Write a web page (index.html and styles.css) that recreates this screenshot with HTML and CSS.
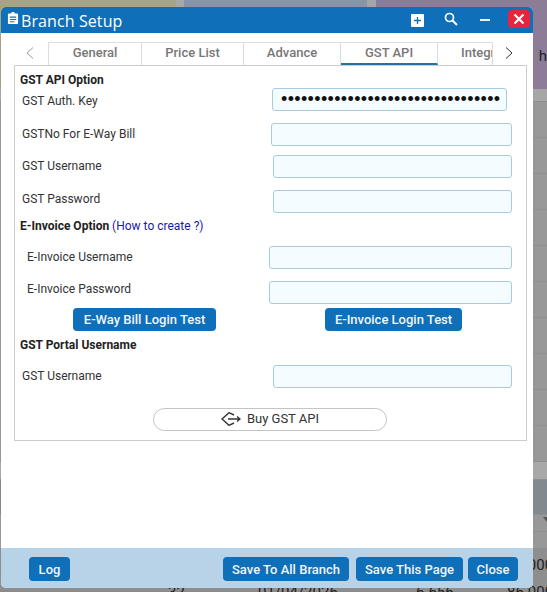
FILE: index.html
```html
<!DOCTYPE html>
<html lang="en">
<head>
  <meta charset="utf-8">
  <title>Branch Setup</title>
  <meta name="viewport" content="width=device-width, initial-scale=1.0">
  <link rel="stylesheet" href="styles.css">
</head>
<body>
  <!-- Page behind the dialog -->
  <div class="backdrop">
    <div class="backdrop-top">
      <div class="seg-tan"></div>
      <div class="seg-blue"></div>
      <div class="seg-purple"><span class="stray-h">h</span></div>
    </div>
    <div class="backdrop-rows">
      <div class="grey-row light"></div>
      <div class="grey-row"></div>
      <div class="grey-row"></div>
      <div class="grey-row"></div>
      <div class="grey-row"></div>
      <div class="grey-row"></div>
      <div class="grey-row"></div>
      <div class="grey-row"></div>
      <div class="grey-row"></div>
      <div class="grey-row"></div>
      <div class="grey-row"></div>
      <div class="grey-row band"></div>
      <div class="grey-row head"></div>
      <div class="grey-row short"><span class="sort-mark"></span></div>
      <div class="grey-row short"></div>
      <div class="grey-row cut">86.000</div>
      <div class="back-cells">
        <span class="cell-a">32</span>
        <span class="cell-b">01/04/2026</span>
        <span class="cell-c">6.656</span>
        <span class="cell-d">86.000</span>
      </div>
    </div>
  </div>

  <div class="dialog">
    <div class="dialog-head">
      <svg class="title-icon" viewBox="0 0 12 13" width="12" height="12">
        <path fill="#fff" d="M4 1.500a2 1.500 0 0 1 4 0h2.500a1 1 0 0 1 1 1V12a1 1 0 0 1-1 1h-9a1 1 0 0 1-1-1V2.500a1 1 0 0 1 1-1z"/>
        <path fill="#0f6fb8" d="M2.500 5h7v1.200h-7zM2.500 7.500h7v1.200h-7zM2.500 10h5v1h-5z"/>
      </svg>
      <span class="dialog-title">Branch Setup</span>
      <div class="head-tools">
        <svg class="tool-add" viewBox="0 0 13 13" width="13" height="13">
          <rect width="13" height="13" rx="1" fill="#fff"/>
          <path d="M6.500 3v7M3 6.500h7" stroke="#0f6fb8" stroke-width="1.300"/>
        </svg>
        <svg class="tool-search" viewBox="0 0 14 14" width="14" height="14">
          <circle cx="5.500" cy="5.500" r="4" fill="none" stroke="#fff" stroke-width="1.700"/>
          <path d="M8.500 8.500l4.500 4.500" stroke="#fff" stroke-width="2"/>
        </svg>
        <span class="tool-min"></span>
        <span class="tool-close">
          <svg viewBox="0 0 12 12" width="12" height="12">
            <path d="M1.500 1.500l9 9M10.500 1.500l-9 9" stroke="#fff" stroke-width="2.200"/>
          </svg>
        </span>
      </div>
    </div>

    <div class="tabs">
      <svg class="tab-arrow prev" viewBox="0 0 8 12" width="8" height="12">
        <path d="M7 .5L1 6l6 5.500" fill="none" stroke="#999" stroke-width="1"/>
      </svg>
      <div class="tab tab-general">General</div>
      <div class="tab tab-price">Price List</div>
      <div class="tab tab-advance">Advance</div>
      <div class="tab tab-gst active">GST API</div>
      <div class="tab tab-integ"><span>Integration</span></div>
      <svg class="tab-arrow next" viewBox="0 0 8 12" width="8" height="12">
        <path d="M1 .5L7 6l-6 5.500" fill="none" stroke="#333" stroke-width="1"/>
      </svg>
    </div>

    <div class="panel">
      <div class="section-title first">GST API Option</div>

      <div class="row row-auth">
        <label>GST Auth. Key</label>
        <input class="field auth" type="password" value="123456789012345678901234567890123">
      </div>
      <div class="row row-gstno">
        <label>GSTNo For E-Way Bill</label>
        <input class="field w241" type="text">
      </div>
      <div class="row row-user">
        <label>GST Username</label>
        <input class="field w239" type="text">
      </div>
      <div class="row row-pass">
        <label>GST Password</label>
        <input class="field w239" type="text">
      </div>

      <div class="section-title invoice">E-Invoice Option <a href="#">(How to create ?)</a></div>

      <div class="row indent row-inv-user">
        <label>E-Invoice Username</label>
        <input class="field w243" type="text">
      </div>
      <div class="row indent row-inv-pass">
        <label>E-Invoice Password</label>
        <input class="field w243" type="text">
      </div>

      <div class="test-buttons">
        <button class="btn btn-eway">E-Way Bill Login Test</button>
        <button class="btn btn-einv">E-Invoice Login Test</button>
      </div>

      <div class="section-title portal">GST Portal Username</div>

      <div class="row row-portal">
        <label>GST Username</label>
        <input class="field w239" type="text">
      </div>

      <button class="buy">
        <svg viewBox="0 0 20 14" width="20" height="14">
          <path d="M13 3L8 .7 1 7l7 6.300L13 11" fill="none" stroke="#333" stroke-width="1.400"/>
          <path d="M7 7h12M16 4.500L19 7l-3 2.500" fill="none" stroke="#333" stroke-width="1.400"/>
        </svg>
        <span>Buy GST API</span>
      </button>
    </div>

    <div class="dialog-foot">
      <button class="btn btn-log">Log</button>
      <div class="foot-right">
        <button class="btn btn-all">Save To All Branch</button>
        <button class="btn btn-page">Save This Page</button>
        <button class="btn btn-close">Close</button>
      </div>
    </div>
  </div>
</body>
</html>
```

FILE: styles.css
```css
html, body {
  margin: 0;
  padding: 0;
  height: 592px;
  overflow: hidden;
}
body {
  position: relative;
  width: 547px;
  background: #8a8a8a;
  font-family: Roboto, "Liberation Sans", sans-serif;
  color: #333;
}

/* page behind the dialog */
.backdrop {
  position: absolute;
  inset: 0;
  display: flex;
  flex-direction: column;
  font-size: 15px;
  color: #222;
  overflow: hidden;
}
.backdrop-top {
  display: flex;
  height: 89px;
  flex: none;
}
.seg-tan {
  width: 177px;
  background: #a8a382;
  border-right: 8px solid #a9a7a4;
}
.seg-blue {
  width: 184px;
  background: #8994a9;
  border-right: 9px solid #a8a3a6;
}
.seg-purple {
  flex: 1;
  background: #8d7c98;
}
.stray-h {
  display: block;
  margin: 47px 0 0 163px;
}
.backdrop-rows {
  flex: 1;
  position: relative;
  display: flex;
  flex-direction: column;
}
.grey-row {
  flex: none;
  position: relative;
  height: 36px;
  background: #989898;
  border-bottom: 1px solid #8f8f8f;
  box-sizing: border-box;
}
.grey-row.light {
  height: 13px;
  background: #a6a6a6;
}
.grey-row.band {
  height: 18px;
  background: #a8a8a8;
}
.grey-row.head {
  height: 35px;
  background: #828a90;
}
.grey-row.short {
  height: 17px;
}
.grey-row.cut {
  height: 42px;
  padding: 7px 0 0 507px;
  white-space: nowrap;
  overflow: hidden;
  border-bottom: none;
  background: #8e8e8e;
}
.sort-mark {
  position: absolute;
  left: 543px;
  top: 2px;
  border: 4px solid transparent;
  border-top: 5px solid #555;
}
.back-cells {
  position: absolute;
  left: 0;
  top: 494px;
  white-space: nowrap;
}
.back-cells span {
  position: absolute;
  top: 0;
}
.cell-a { left: 168px; }
.cell-b { left: 258px; }
.cell-c { left: 416px; }
.cell-d { left: 507px; }

/* dialog */
.dialog {
  position: absolute;
  left: 1px;
  top: 7px;
  width: 532px;
  height: 581px;
  display: flex;
  flex-direction: column;
  background: #fff;
  border-radius: 5px;
  overflow: hidden;
}
.dialog-head {
  height: 26px;
  flex: none;
  display: flex;
  align-items: center;
  background: #0f6fb8;
  color: #fff;
}
.title-icon {
  margin: -5px 2px 0 6px;
}
.dialog-title {
  font-family: "Open Sans", sans-serif;
  font-size: 16px;
  letter-spacing: 0.1px;
  margin-top: 1px;
}
.head-tools {
  margin-left: auto;
  display: flex;
  align-items: center;
}
.tool-add {
  margin-right: 20px;
}
.tool-search {
  margin-right: 22px;
  margin-top: -3px;
}
.tool-min {
  width: 10px;
  height: 2px;
  background: #e9f2f9;
  margin-right: 18px;
}
.tool-close {
  width: 22px;
  height: 18px;
  margin-right: 3px;
  margin-top: -2px;
  display: flex;
  align-items: center;
  justify-content: center;
  background: #e8233f;
  border-radius: 4px;
}

.tabs {
  height: 23px;
  margin-top: 9px;
  flex: none;
  display: flex;
  padding-left: 47px;
  position: relative;
  font-size: 13px;
  font-weight: 500;
}
.tab {
  box-sizing: border-box;
  height: 23px;
  line-height: 20px;
  text-align: center;
  color: #777;
  border: 1px solid #ddd;
  border-width: 1px 1px 0 0;
  overflow: hidden;
  white-space: nowrap;
}
.tab-general { width: 94px; border-left: 1px solid #ddd; }
.tab-price { width: 102px; }
.tab-advance { width: 97px; }
.tab-gst { width: 97px; }
.tab-integ { width: 55px; text-align: left; padding-left: 23px; }
.tab.active {
  border-bottom: 2px solid #2a6f9f;
}
.tab-arrow {
  position: absolute;
  top: 5px;
}
.tab-arrow.prev { left: 25px; }
.tab-arrow.next { left: 504px; }

.panel {
  box-sizing: border-box;
  width: 513px;
  height: 376px;
  margin-left: 13px;
  border: 1px solid #ccc;
  flex: none;
  padding: 0 14px 0 5px;
  font-size: 12px;
}
.section-title {
  font-weight: 700;
  font-size: 12px;
  line-height: 14px;
  color: #222;
}
.section-title a {
  color: #1a1aa6;
  font-weight: 400;
  text-decoration: none;
}
.section-title.first { margin-top: 7px; }
.section-title.invoice { margin-top: 6px; }
.section-title.portal { margin-top: 7px; }

.row {
  display: flex;
  align-items: center;
  justify-content: space-between;
  padding-left: 2px;
}
.row label {
  color: #333;
}
.row.indent {
  padding-left: 7px;
}
.field {
  box-sizing: border-box;
  height: 23px;
  background: #f5fcff;
  border: 1px solid #a9cbe0;
  border-radius: 3px;
  padding: 0 6px;
  outline: none;
  color: #111;
}
.field.auth {
  width: 235px;
  margin-right: 5px;
  padding: 0 0 0 8px;
  font-size: 18px;
  letter-spacing: 0.35px;
}
.w241 { width: 241px; }
.w239 { width: 239px; }
.w243 { width: 243px; }

.row-auth { margin-top: 1px; }
.row-auth label { margin-top: 2px; }
.row-gstno { margin-top: 12px; }
.row-gstno label { margin-bottom: 2px; }
.row-user { margin-top: 9px; }
.row-user label { margin-bottom: 2px; }
.row-pass { margin-top: 12px; }
.row-pass label { margin-bottom: 6px; }
.row-inv-user { margin-top: 13px; }
.row-inv-user label { margin-bottom: 2px; }
.row-inv-pass { margin-top: 12px; }
.row-inv-pass label { margin-bottom: 8px; }
.row-portal { margin-top: 13px; }
.row-portal label { margin-bottom: 2px; }

.btn {
  box-sizing: border-box;
  height: 23px;
  padding: 0;
  border: none;
  border-radius: 4px;
  background: #0f6fb8;
  color: #eef6fb;
  font-family: Roboto, sans-serif;
  font-size: 13px;
  font-weight: 500;
  white-space: nowrap;
}
.test-buttons {
  display: flex;
  margin-top: 4px;
  padding-left: 53px;
}
.btn-eway { width: 143px; }
.btn-einv { width: 137px; margin-left: 109px; }

.buy {
  display: flex;
  align-items: center;
  justify-content: center;
  gap: 6px;
  box-sizing: border-box;
  width: 234px;
  height: 23px;
  margin: 20px 0 0 133px;
  background: #fff;
  border: 1px solid #c4c4c4;
  border-radius: 12px;
  font-family: Roboto, sans-serif;
  font-size: 13px;
  color: #333;
  padding: 0 0 2px;
}

.dialog-foot {
  margin-top: auto;
  height: 40px;
  flex: none;
  display: flex;
  align-items: center;
  padding: 2px 15px 0 28px;
  box-sizing: border-box;
  background: #b8d3e8;
}
.btn-log { width: 41px; height: 24px; }
.foot-right {
  margin-left: auto;
  display: flex;
  gap: 7px;
}
.foot-right .btn { height: 24px; }
.btn-all { width: 126px; }
.btn-page { width: 107px; }
.btn-close { width: 50px; margin-left: -2px; }
```
